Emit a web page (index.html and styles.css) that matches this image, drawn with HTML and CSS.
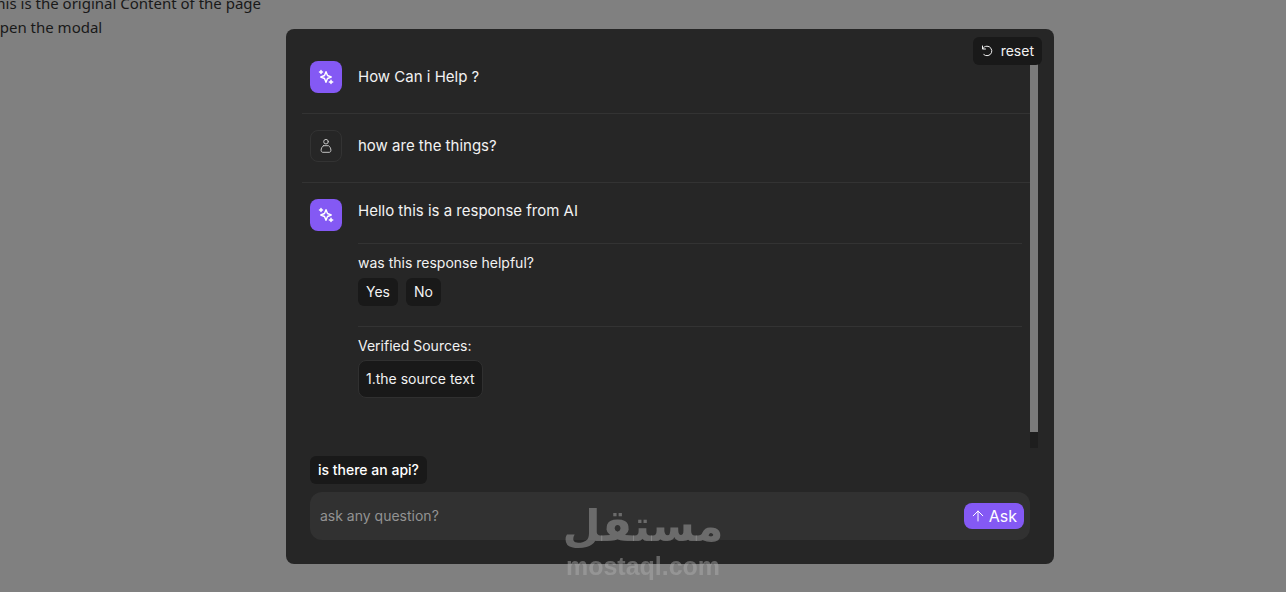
FILE: index.html
```
<!DOCTYPE html>
<html lang="en">
<head>
    <meta charset="UTF-8">
    <meta name="viewport" content="width=device-width, initial-scale=1.0">
    <title>Ask AI</title>
    <link rel="stylesheet" href="styles.css">
</head>
<body>
    <svg class="sprite" aria-hidden="true">
        <symbol id="sparkles" viewBox="0 0 16 16">
            <path d="M8 2.8 9.5 6.5 13.2 8 9.5 9.5 8 13.2 6.5 9.5 2.8 8 6.5 6.5Z" />
            <path d="M3 1.5v3M1.5 3h3M13 11.2v3.4M11.3 12.9h3.4" />
        </symbol>
    </svg>

    <main class="page">
        <p>This is the original Content of the page</p>
        <p>Open the modal</p>
    </main>

    <div class="overlay">
        <section class="modal" role="dialog" aria-label="Ask AI">
            <button class="btn reset" type="button">
                <svg viewBox="0 0 12 12"><path d="M1.5 1v3h3M1.7 3.8C2.5 2.2 4 1.2 6 1.2a4.8 4.8 0 1 1-3.2 8.4" /></svg>
                reset
            </button>

            <div class="chat">
                <div class="messages">
                    <div class="message">
                        <span class="avatar ai"><svg><use href="#sparkles" /></svg></span>
                        <p class="text">How Can i Help ?</p>
                    </div>
                    <div class="message">
                        <span class="avatar user">
                            <svg viewBox="0 0 16 16"><circle cx="8" cy="3.7" r="2.3" /><path d="M5.5 7.7h5c1.5.8 2.4 2.8 2.4 4.6 0 1.2-.6 2-1.8 2H4.9c-1.2 0-1.8-.8-1.8-2 0-1.8.9-3.8 2.4-4.6Z" /></svg>
                        </span>
                        <p class="text">how are the things?</p>
                    </div>
                    <div class="message answer">
                        <span class="avatar ai"><svg><use href="#sparkles" /></svg></span>
                        <div class="body">
                            <p class="text">Hello this is a response from AI</p>
                            <div class="block">
                                <p class="label">was this response helpful?</p>
                                <div class="choices">
                                    <button class="btn" type="button">Yes</button>
                                    <button class="btn" type="button">No</button>
                                </div>
                            </div>
                            <div class="block">
                                <p class="label">Verified Sources:</p>
                                <a class="source" href="#">1.the source text</a>
                            </div>
                        </div>
                    </div>
                </div>
                <div class="scrollbar"><div class="thumb"></div></div>
            </div>

            <div class="bottom">
                <button class="btn suggestion" type="button">is there an api?</button>
                <form class="ask-form">
                    <input type="text" placeholder="ask any question?" aria-label="Question">
                    <button class="ask" type="button">
                        <svg viewBox="0 0 12 12"><path d="M6 11V1M1.2 5.8 6 1l4.8 4.8" /></svg>
                        Ask
                    </button>
                </form>
            </div>
        </section>
    </div>

    <div class="watermark">
        <span class="brand" lang="ar">مستقل</span>
        <span class="domain">mostaql.com</span>
    </div>
</body>
</html>
```
FILE: styles.css
```
* {
    box-sizing: border-box;
}

body {
    margin: 0;
    height: 100vh;
    overflow: hidden;
    background: #808080;
    color: #191919;
    font-family: "Noto Sans", "Open Sans", sans-serif;
    font-size: 15px;
    line-height: 24px;
}

p {
    margin: 0;
}

button,
input {
    font: inherit;
    color: inherit;
    border: 0;
}

svg {
    fill: none;
    stroke: currentColor;
    stroke-linecap: round;
    stroke-linejoin: round;
}

.sprite {
    position: absolute;
    width: 0;
    height: 0;
}

/* page behind the modal */
.page {
    margin: -9px 0 0 -12px;
}

/* modal */
.overlay {
    position: fixed;
    inset: 0;
    display: flex;
    justify-content: center;
    padding: 29px 0 28px 54px;
}

.modal {
    position: relative;
    display: flex;
    flex-direction: column;
    width: 100%;
    max-width: 768px;
    padding: 16px;
    border-radius: 8px;
    background: #262626;
    color: #f2f2f2;
    font-family: Inter, "Open Sans", sans-serif;
    font-size: 14px;
    line-height: 20px;
}

.btn {
    padding: 4px 8px;
    border-radius: 6px;
    background: #191919;
}

.reset {
    position: absolute;
    top: 8px;
    right: 12px;
    display: flex;
    align-items: center;
    gap: 8px;
}

.reset svg {
    width: 12px;
    height: 12px;
}

/* conversation */
.chat {
    display: flex;
    flex: 1;
    min-height: 0;
}

.messages {
    flex: 1;
    overflow-y: auto;
    scrollbar-width: none;
}

.scrollbar {
    width: 8px;
    background: #1e1e1e;
}

.thumb {
    height: 96%;
    background: #7b7b7b;
}

.message {
    display: flex;
    align-items: center;
    gap: 16px;
    padding: 16px 8px 20px;
    border-bottom: 1px solid #333;
}

.answer {
    align-items: flex-start;
    border-bottom: 0;
    padding-bottom: 68px;
}

.avatar {
    display: grid;
    place-items: center;
    flex: none;
    width: 32px;
    height: 32px;
    border-radius: 8px;
}

.avatar svg {
    width: 16px;
    height: 16px;
}

.ai {
    background: #8459f4;
    color: #fff;
    stroke-width: 1.5;
}

.user {
    border: 1px solid #333;
    color: #c4c4c4;
}

.text {
    font-size: 15px;
    line-height: 24px;
}

.body {
    flex: 1;
}

.block {
    margin-top: 20px;
    padding-top: 9px;
    border-top: 1px solid #333;
}

.choices {
    display: flex;
    gap: 8px;
    margin-top: 5px;
}

.source {
    display: block;
    width: fit-content;
    margin-top: 4px;
    padding: 8px 7px;
    border: 1px solid #303030;
    border-radius: 8px;
    background: #191919;
    color: inherit;
    text-decoration: none;
}

/* question box */
.bottom {
    padding: 8px;
}

.suggestion {
    display: block;
    margin-bottom: 8px;
    color: #fff;
    font-weight: 500;
}

.ask-form {
    display: flex;
    align-items: center;
    height: 48px;
    padding: 0 6px 0 10px;
    border-radius: 12px;
    background: #313131;
}

.ask-form input {
    flex: 1;
    min-width: 0;
    padding: 0;
    background: none;
    outline: 0;
}

.ask-form input::placeholder {
    color: #939393;
}

.ask {
    display: flex;
    align-items: center;
    gap: 5px;
    padding: 1px 7px 1px 8px;
    border-radius: 8px;
    background: #8459f4;
    color: #fff;
    font-size: 16px;
    line-height: 24px;
}

.ask svg {
    width: 12px;
    height: 12px;
}

/* watermark */
.watermark {
    position: fixed;
    left: 50%;
    bottom: 12px;
    transform: translateX(-50%);
    display: flex;
    flex-direction: column;
    align-items: center;
    color: rgba(172, 172, 172, 0.48);
    font-weight: bold;
    pointer-events: none;
}

.brand {
    font-family: "DejaVu Sans", sans-serif;
    font-size: 44px;
    line-height: 52px;
}

.domain {
    font-family: "Liberation Sans", sans-serif;
    font-size: 25px;
    line-height: 28px;
}
```
